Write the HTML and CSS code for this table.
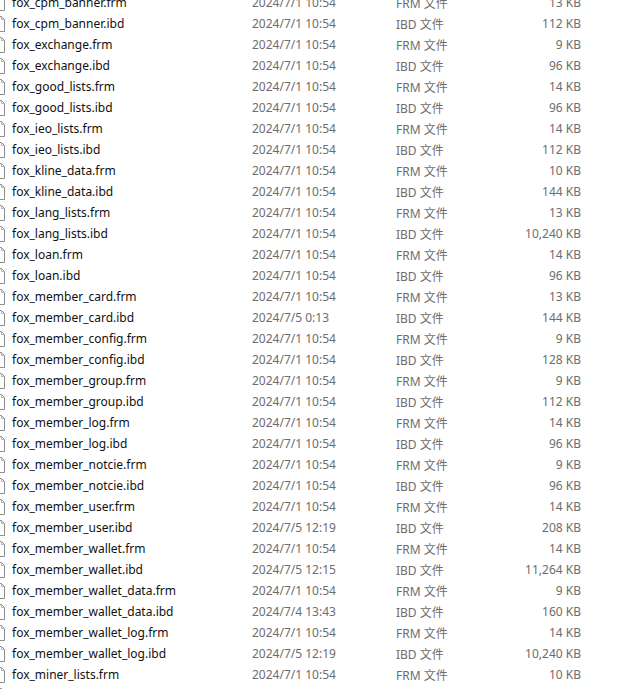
FILE: index.html
```html
<!DOCTYPE html>
<html>
<head>
<meta charset="utf-8">
<link rel="stylesheet" href="styles.css">
</head>
<body>
<div class="viewport">
  <div class="list" id="list"></div>
</div>
<script>
const rows = [
["fox_cpm_banner.frm","2024/7/1 10:54","FRM","13 KB"],
["fox_cpm_banner.ibd","2024/7/1 10:54","IBD","112 KB"],
["fox_exchange.frm","2024/7/1 10:54","FRM","9 KB"],
["fox_exchange.ibd","2024/7/1 10:54","IBD","96 KB"],
["fox_good_lists.frm","2024/7/1 10:54","FRM","14 KB"],
["fox_good_lists.ibd","2024/7/1 10:54","IBD","96 KB"],
["fox_ieo_lists.frm","2024/7/1 10:54","FRM","14 KB"],
["fox_ieo_lists.ibd","2024/7/1 10:54","IBD","112 KB"],
["fox_kline_data.frm","2024/7/1 10:54","FRM","10 KB"],
["fox_kline_data.ibd","2024/7/1 10:54","IBD","144 KB"],
["fox_lang_lists.frm","2024/7/1 10:54","FRM","13 KB"],
["fox_lang_lists.ibd","2024/7/1 10:54","IBD","10,240 KB"],
["fox_loan.frm","2024/7/1 10:54","FRM","14 KB"],
["fox_loan.ibd","2024/7/1 10:54","IBD","96 KB"],
["fox_member_card.frm","2024/7/1 10:54","FRM","13 KB"],
["fox_member_card.ibd","2024/7/5 0:13","IBD","144 KB"],
["fox_member_config.frm","2024/7/1 10:54","FRM","9 KB"],
["fox_member_config.ibd","2024/7/1 10:54","IBD","128 KB"],
["fox_member_group.frm","2024/7/1 10:54","FRM","9 KB"],
["fox_member_group.ibd","2024/7/1 10:54","IBD","112 KB"],
["fox_member_log.frm","2024/7/1 10:54","FRM","14 KB"],
["fox_member_log.ibd","2024/7/1 10:54","IBD","96 KB"],
["fox_member_notcie.frm","2024/7/1 10:54","FRM","9 KB"],
["fox_member_notcie.ibd","2024/7/1 10:54","IBD","96 KB"],
["fox_member_user.frm","2024/7/1 10:54","FRM","14 KB"],
["fox_member_user.ibd","2024/7/5 12:19","IBD","208 KB"],
["fox_member_wallet.frm","2024/7/1 10:54","FRM","14 KB"],
["fox_member_wallet.ibd","2024/7/5 12:15","IBD","11,264 KB"],
["fox_member_wallet_data.frm","2024/7/1 10:54","FRM","9 KB"],
["fox_member_wallet_data.ibd","2024/7/4 13:43","IBD","160 KB"],
["fox_member_wallet_log.frm","2024/7/1 10:54","FRM","14 KB"],
["fox_member_wallet_log.ibd","2024/7/5 12:19","IBD","10,240 KB"],
["fox_miner_lists.frm","2024/7/1 10:54","FRM","10 KB"],
["fox_miner_lists.ibd","2024/7/1 10:54","IBD","96 KB"]
];
const icon = '<svg class="ico" width="16" height="16" viewBox="0 0 16 16"><path d="M1.5 0.5H12.5L15.5 3.5V15.5H1.5Z" fill="#fff" stroke="#8c8c8c"/><path d="M12.5 0.5V3.5H15.5" fill="none" stroke="#b5b5b5"/></svg>';
const list = document.getElementById('list');
list.innerHTML = rows.map(r =>
  '<div class="row"><span class="icocell">' + icon + '</span><span class="name">' + r[0] +
  '</span><span class="date">' + r[1] + '</span><span class="type">' + r[2] +
  ' 文件</span><span class="size">' + r[3] + '</span></div>').join('');
</script>
</body>
</html>
```
FILE: styles.css
```css
html, body {
  margin: 0;
  padding: 0;
  background: #fff;
}
body {
  font-family: "Noto Sans", "Noto Sans CJK SC", sans-serif;
  font-size: 12px;
}
.viewport {
  height: 689px;
  overflow: hidden;
}
.list {
  margin-top: -8px;
}
.row {
  display: grid;
  grid-template-columns: 12px 240px 144px 110px 75px;
  height: 21px;
  align-items: center;
  white-space: nowrap;
}
.icocell {
  display: flex;
  align-items: center;
  overflow: visible;
}
.ico {
  margin-left: -11px;
  flex: none;
}
.name {
  color: #111;
}
.date, .type, .size {
  color: #6d6d6d;
}
.size {
  text-align: right;
}
```
